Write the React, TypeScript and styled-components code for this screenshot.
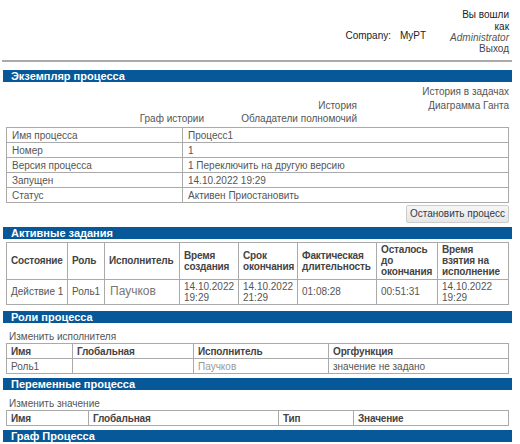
import styled, { createGlobalStyle } from "styled-components";

const Global = createGlobalStyle`
  body {
    margin: 0;
    background: #fff;
    font-family: "Liberation Sans", Arial, sans-serif;
    font-size: 10px;
    color: #555;
  }
`;

const Page = styled.div`
  width: 510px;
  margin-left: 2px;
`;

const Header = styled.div`
  display: flex;
  justify-content: flex-end;
  align-items: center;
  height: 62px;
  padding: 4px 3px 0 0;
  border-bottom: 2px solid #aaa;
  box-sizing: border-box;
`;

const Company = styled.div`
  color: #222;
  margin-right: 24px;
  margin-top: 6px;
  span {
    margin-left: 9px;
  }
`;

const User = styled.div`
  text-align: right;
  line-height: 11.4px;
  color: #222;
  em {
    color: #555;
  }
  a {
    color: #444;
  }
`;

const Bar = styled.div<{ $top: number }>`
  margin: ${({ $top }) => $top}px 0 0 1px;
  height: 12px;
  background: #065899;
  color: #fff;
  font-weight: bold;
  font-size: 11px;
  line-height: 12px;
  padding-left: 8px;
  white-space: nowrap;
  overflow: hidden;
`;

const Links = styled.div`
  display: grid;
  grid-template-columns: 202px 153px 152px;
  grid-auto-rows: 13.5px;
  margin-top: 3px;
  text-align: right;
  color: #555;
  line-height: 13px;
`;

const Table = styled.table`
  border-collapse: collapse;
  margin-left: 4px;
  width: 503px;
  table-layout: fixed;
  td, th {
    border: 1px solid #aaa;
    padding: 0 4px;
    text-align: left;
    vertical-align: middle;
    color: #555;
    font-size: 10px;
    line-height: 11px;
  }
  th {
    font-weight: bold;
    color: #444;
    letter-spacing: -0.15px;
  }
`;

const Col = styled.col<{ $w?: number }>`
  width: ${({ $w }) => ($w ? `${$w}px` : "auto")};
`;

const InfoTable = styled(Table)`
  margin-top: 1px;
  td {
    height: 13px;
    padding: 1px 5px 0;
  }
`;

const TaskTable = styled(Table)`
  margin-top: 3px;
  th {
    height: 36px;
    padding: 0 3px 0 4px;
  }
  td {
    height: 24px;
    padding: 0 3px 0 4px;
  }
`;

const SmallTable = styled(Table)`
  th, td {
    height: 13px;
    padding: 1px 4px 0;
  }
`;

const Actions = styled.div`
  display: flex;
  justify-content: flex-end;
  padding-right: 3px;
  margin-top: 2px;
`;

const Button = styled.button`
  font-family: "Liberation Sans", Arial, sans-serif;
  font-size: 10px;
  color: #2d3a4a;
  background: linear-gradient(#f6f6f6, #e6e6e6);
  border: 1px solid #ccc;
  border-radius: 2px;
  height: 18px;
  padding: 0 3px;
`;

const Note = styled.div`
  margin: 8px 0 1px 7px;
  color: #555;
  line-height: 11px;
`;

const Name = styled.span<{ $big?: boolean }>`
  color: ${({ $big }) => ($big ? "#777" : "#999")};
  font-size: ${({ $big }) => ($big ? "12px" : "10px")};
  padding-left: ${({ $big }) => ($big ? "1px" : "0")};
`;

const info = [
  ["Имя процесса", "Процесс1"],
  ["Номер", "1"],
  ["Версия процесса", "1 Переключить на другую версию"],
  ["Запущен", "14.10.2022 19:29"],
  ["Статус", "Активен Приостановить"],
];

export default function App() {
  return (
    <Page>
      <Global />
      <Header>
        <Company>
          Company:<span>MyPT</span>
        </Company>
        <User>
          Вы вошли
          <br />
          как
          <br />
          <em>Administrator</em>
          <br />
          <a>Выход</a>
        </User>
      </Header>

      <Bar $top={8}>Экземпляр процесса</Bar>
      <Links>
        <div />
        <div />
        <div>История в задачах</div>
        <div />
        <div>История</div>
        <div>Диаграмма Ганта</div>
        <div>Граф истории</div>
        <div>Обладатели полномочий</div>
        <div />
      </Links>
      <InfoTable>
        <colgroup>
          <Col $w={176} />
          <Col />
        </colgroup>
        <tbody>
          {info.map(([k, v]) => (
            <tr key={k}>
              <td>{k}</td>
              <td>{v}</td>
            </tr>
          ))}
        </tbody>
      </InfoTable>
      <Actions>
        <Button>Остановить процесс</Button>
      </Actions>

      <Bar $top={4}>Активные задания</Bar>
      <TaskTable>
        <colgroup>
          <Col $w={61} />
          <Col $w={37} />
          <Col $w={75} />
          <Col $w={59} />
          <Col $w={59} />
          <Col $w={79} />
          <Col $w={61} />
          <Col />
        </colgroup>
        <thead>
          <tr>
            <th>Состояние</th>
            <th>Роль</th>
            <th>Исполнитель</th>
            <th>Время создания</th>
            <th>Срок окончания</th>
            <th>Фактическая длительность</th>
            <th>Осталось до окончания</th>
            <th>Время взятия на исполнение</th>
          </tr>
        </thead>
        <tbody>
          <tr>
            <td>Действие&nbsp;1</td>
            <td>Роль1</td>
            <td>
              <Name $big>Паучков</Name>
            </td>
            <td>14.10.2022 19:29</td>
            <td>14.10.2022 21:29</td>
            <td>01:08:28</td>
            <td>00:51:31</td>
            <td>14.10.2022 19:29</td>
          </tr>
        </tbody>
      </TaskTable>

      <Bar $top={6}>Роли процесса</Bar>
      <Note>Изменить исполнителя</Note>
      <SmallTable>
        <colgroup>
          <Col $w={66} />
          <Col $w={121} />
          <Col $w={135} />
          <Col />
        </colgroup>
        <thead>
          <tr>
            <th>Имя</th>
            <th>Глобальная</th>
            <th>Исполнитель</th>
            <th>Оргфункция</th>
          </tr>
        </thead>
        <tbody>
          <tr>
            <td>Роль1</td>
            <td></td>
            <td>
              <Name>Паучков</Name>
            </td>
            <td>значение не задано</td>
          </tr>
        </tbody>
      </SmallTable>

      <Bar $top={4}>Переменные процесса</Bar>
      <Note>Изменить значение</Note>
      <SmallTable>
        <colgroup>
          <Col $w={82} />
          <Col $w={190} />
          <Col $w={75} />
          <Col />
        </colgroup>
        <thead>
          <tr>
            <th>Имя</th>
            <th>Глобальная</th>
            <th>Тип</th>
            <th>Значение</th>
          </tr>
        </thead>
      </SmallTable>

      <Bar $top={4}>Граф Процесса</Bar>
    </Page>
  );
}
